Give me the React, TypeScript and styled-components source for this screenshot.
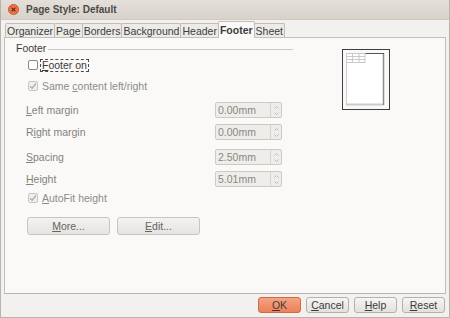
import React from "react";
import styled, { createGlobalStyle } from "styled-components";

const Global = createGlobalStyle`
  html, body { margin: 0; padding: 0; }
  body {
    width: 450px;
    height: 318px;
    overflow: hidden;
    font-family: "Liberation Sans", Arial, sans-serif;
    font-size: 10.5px;
    color: #3c3c3c;
    background: #f2f1f0;
  }
`;

const Window = styled.div`
  box-sizing: border-box;
  width: 450px;
  height: 318px;
  border: 1px solid #b9b3ac;
  border-top: none;
  background: #f2f1f0;
  display: flex;
  flex-direction: column;
`;

const TitleBar = styled.div`
  box-sizing: border-box;
  height: 20px;
  flex: none;
  display: flex;
  align-items: center;
  padding: 0 0 1px 7px;
  gap: 7px;
  background: linear-gradient(#e4dfd9, #d8d2cb);
  border-bottom: 1px solid #cfc9c1;
`;

const Title = styled.span`
  font-weight: bold;
  font-size: 10px;
  color: #4d4a46;
`;

const Body = styled.div`
  flex: 1;
  display: flex;
  flex-direction: column;
  padding: 0 3px;
`;

const TabBar = styled.div`
  height: 17px;
  flex: none;
  display: flex;
  align-items: flex-end;
  padding-left: 1px;
`;

const Tab = styled.div<{ $active?: boolean }>`
  box-sizing: border-box;
  height: ${(p) => (p.$active ? 17 : 14)}px;
  margin-bottom: ${(p) => (p.$active ? -1 : 0)}px;
  margin-left: -1px;
  &:first-child { margin-left: 0; }
  padding: ${(p) => (p.$active ? "0 1px 1px" : "0 1px")};
  border: 1px solid #c2bdb6;
  border-bottom: none;
  border-radius: 2px 2px 0 0;
  background: ${(p) => (p.$active ? "#faf9f7" : "#ecebe8")};
  font-weight: ${(p) => (p.$active ? "bold" : "normal")};
  color: #3c3c3c;
  display: flex;
  align-items: center;
  position: relative;
  z-index: ${(p) => (p.$active ? 1 : 0)};
`;

const Panel = styled.div`
  box-sizing: border-box;
  height: 257px;
  flex: none;
  border: 1px solid #c4bfb8;
  border-bottom-color: #bcb6af;
  background: #faf9f7;
  display: flex;
  padding-left: 11px;
`;

const LeftCol = styled.div`
  width: 277px;
  display: flex;
  flex-direction: column;
`;

const Heading = styled.div`
  display: flex;
  align-items: center;
  height: 13px;
  margin-top: 3px;
  gap: 2px;
  color: #3c3c3c;
`;

const HeadingLine = styled.div`
  flex: 1;
  height: 1px;
  margin-top: 3px;
  background: #cbc6c0;
`;

const CheckRow = styled.div<{ $height?: number; $top?: number }>`
  display: flex;
  align-items: center;
  height: ${(p) => p.$height ?? 18}px;
  margin-top: ${(p) => p.$top ?? 0}px;
  margin-left: 12px;
`;

const Box = styled.span<{ $disabled?: boolean }>`
  box-sizing: border-box;
  width: 10px;
  height: 10px;
  flex: none;
  border: 1px solid ${(p) => (p.$disabled ? "#c9c5bf" : "#8f8a85")};
  border-radius: 2px;
  background: ${(p) => (p.$disabled ? "#f1efec" : "#ffffff")};
  display: flex;
  align-items: center;
  justify-content: center;
`;

const CheckLabel = styled.span<{ $disabled?: boolean; $focus?: boolean }>`
  margin-left: 2px;
  padding: 0 1px;
  line-height: 11px;
  border: 1px dashed ${(p) => (p.$focus ? "#4a4a4a" : "transparent")};
  color: ${(p) => (p.$disabled ? "#8e8b87" : "#3c3c3c")};
  white-space: nowrap;
`;

const U = styled.span`
  text-decoration: underline;
  text-underline-offset: 1px;
`;

const FieldRow = styled.div<{ $top?: number }>`
  display: flex;
  align-items: center;
  height: 22px;
  margin-top: ${(p) => p.$top ?? 0}px;
  margin-left: 10px;
`;

const FieldLabel = styled.span`
  width: 189px;
  color: #85827e;
`;

const Field = styled.div`
  box-sizing: border-box;
  width: 67px;
  height: 16px;
  display: flex;
  border: 1px solid #cdc9c3;
  border-radius: 2px;
  background: #efede9;
`;

const FieldValue = styled.span`
  flex: 1;
  padding-left: 2px;
  line-height: 14px;
  color: #8a8783;
`;

const Spin = styled.div`
  width: 10px;
  border-left: 1px solid #d9d5d0;
  display: flex;
  flex-direction: column;
  align-items: center;
  justify-content: center;
  gap: 3px;
`;

const PanelButtons = styled.div`
  display: flex;
  gap: 7px;
  margin-top: 11px;
  margin-left: 11px;
`;

const PanelButton = styled.div`
  box-sizing: border-box;
  width: 83px;
  height: 18px;
  display: flex;
  align-items: center;
  justify-content: center;
  border: 1px solid #c9c4be;
  border-radius: 3px;
  background: linear-gradient(#f4f3f1, #e6e3e0);
  color: #66635f;
`;

const PreviewCol = styled.div`
  margin-left: 49px;
  margin-top: 11px;
`;

const PreviewFrame = styled.div`
  box-sizing: border-box;
  width: 48px;
  height: 61px;
  border: 1px solid #3f3f3f;
  background: #faf9f7;
  display: flex;
`;

const DialogButtons = styled.div`
  display: flex;
  justify-content: flex-end;
  gap: 5px;
  margin-top: 3px;
  margin-right: 1px;
`;

const DialogButton = styled.div<{ $primary?: boolean }>`
  box-sizing: border-box;
  width: 43px;
  height: 16px;
  display: flex;
  align-items: center;
  justify-content: center;
  border: 1px solid ${(p) => (p.$primary ? "#cf6a43" : "#b5b0aa")};
  border-radius: 3px;
  background: ${(p) =>
    p.$primary
      ? "linear-gradient(#f5a283, #ee8159)"
      : "linear-gradient(#f6f5f4, #e3e0dd)"};
  color: #3c3c3c;
`;

const CloseIcon = () => (
  <svg width="11" height="11" viewBox="0 0 11 11">
    <circle cx="5.5" cy="5.5" r="5" fill="#ef7448" stroke="#c9572f" strokeWidth="1" />
    <path d="M3.6 3.6 L7.4 7.4 M7.4 3.6 L3.6 7.4" stroke="#5b2b18" strokeWidth="1.2" />
  </svg>
);

const Check = () => (
  <svg width="8" height="8" viewBox="0 0 8 8">
    <path d="M1 4.2 L3.1 6.3 L7 1.5" fill="none" stroke="#b3afa9" strokeWidth="1.4" />
  </svg>
);

const Up = () => (
  <svg width="5" height="3" viewBox="0 0 5 3">
    <path d="M0.5 2.5 L2.5 0.5 L4.5 2.5" fill="none" stroke="#b9b5b0" strokeWidth="0.9" />
  </svg>
);

const Down = () => (
  <svg width="5" height="3" viewBox="0 0 5 3">
    <path d="M0.5 0.5 L2.5 2.5 L4.5 0.5" fill="none" stroke="#b9b5b0" strokeWidth="0.9" />
  </svg>
);

const PagePreview = () => (
  <svg width="46" height="59" viewBox="0 0 46 59">
    <rect x="3" y="3" width="38" height="52" fill="#ffffff" />
    <path d="M3.5 3 V55" stroke="#cfcfcf" strokeWidth="1" />
    <path d="M3 54.5 H41" stroke="#cccccc" strokeWidth="2" />
    <path d="M40.5 3 V55" stroke="#8d8d8d" strokeWidth="1.5" />
    <path d="M22 3.5 H41" stroke="#555555" strokeWidth="1" />
    <g stroke="#c9c9c9" strokeWidth="1">
      <path d="M3 3.5 H22 M3 6.5 H22 M3 9.5 H22 M3 12.5 H22" />
      <path d="M9.5 3 V13 M16 3 V13 M22 3 V13" />
    </g>
  </svg>
);

const fields = [
  { label: "Left margin", u: 0, value: "0.00mm", top: 4 },
  { label: "Right margin", u: 1, value: "0.00mm", top: 0 },
  { label: "Spacing", u: 0, value: "2.50mm", top: 3 },
  { label: "Height", u: 0, value: "5.01mm", top: 0 },
];

const mnemonic = (text: string, i: number) => (
  <>
    {text.slice(0, i)}
    <U>{text[i]}</U>
    {text.slice(i + 1)}
  </>
);

export default function App() {
  return (
    <>
      <Global />
      <Window>
        <TitleBar>
          <CloseIcon />
          <Title>Page Style: Default</Title>
        </TitleBar>
        <Body>
          <TabBar>
            {["Organizer", "Page", "Borders", "Background", "Header", "Footer", "Sheet"].map((t) => (
              <Tab key={t} $active={t === "Footer"}>
                {t}
              </Tab>
            ))}
          </TabBar>
          <Panel>
            <LeftCol>
              <Heading>
                Footer
                <HeadingLine />
              </Heading>
              <CheckRow $top={2}>
                <Box />
                <CheckLabel $focus>{mnemonic("Footer on", 0)}</CheckLabel>
              </CheckRow>
              <CheckRow $top={3}>
                <Box $disabled>
                  <Check />
                </Box>
                <CheckLabel $disabled>{mnemonic("Same content left/right", 5)}</CheckLabel>
              </CheckRow>
              {fields.map((f) => (
                <FieldRow key={f.label} $top={f.top}>
                  <FieldLabel>{mnemonic(f.label, f.u)}</FieldLabel>
                  <Field>
                    <FieldValue>{f.value}</FieldValue>
                    <Spin>
                      <Up />
                      <Down />
                    </Spin>
                  </Field>
                </FieldRow>
              ))}
              <CheckRow $height={16}>
                <Box $disabled>
                  <Check />
                </Box>
                <CheckLabel $disabled>{mnemonic("AutoFit height", 0)}</CheckLabel>
              </CheckRow>
              <PanelButtons>
                <PanelButton>{mnemonic("More...", 0)}</PanelButton>
                <PanelButton>{mnemonic("Edit...", 0)}</PanelButton>
              </PanelButtons>
            </LeftCol>
            <PreviewCol>
              <PreviewFrame>
                <PagePreview />
              </PreviewFrame>
            </PreviewCol>
          </Panel>
          <DialogButtons>
            <DialogButton $primary>{mnemonic("OK", 0)}</DialogButton>
            <DialogButton>{mnemonic("Cancel", 0)}</DialogButton>
            <DialogButton>{mnemonic("Help", 0)}</DialogButton>
            <DialogButton>{mnemonic("Reset", 0)}</DialogButton>
          </DialogButtons>
        </Body>
      </Window>
    </>
  );
}
